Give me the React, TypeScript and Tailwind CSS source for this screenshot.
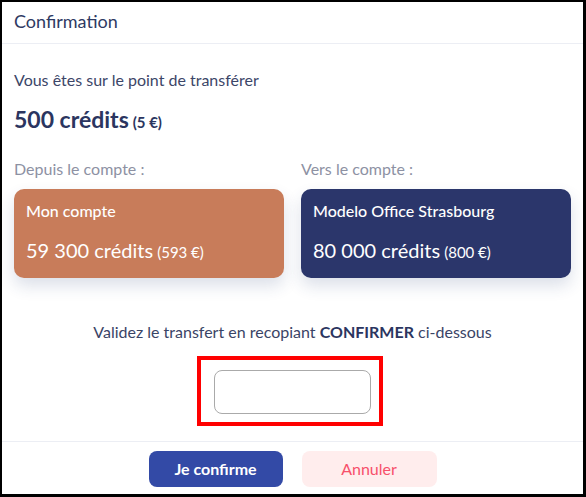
export default function App() {
  return (
    <div className="w-[586px] h-[497px] bg-black pl-[2px] pt-[2px] pr-[3px] pb-[3px] font-['Lato',sans-serif]">
      <div className="h-full bg-white flex flex-col">
        <div className="h-[42px] px-[12px] pb-[2px] flex items-center border-b border-[#eceef4]">
          <h2 className="text-[18px] text-[#2e3a63]">Confirmation</h2>
        </div>

        <div className="px-[12px]">
          <p className="mt-[26px] text-[16px] leading-[20px] text-[#3c4668]">Vous êtes sur le point de transférer</p>
          <p className="mt-[15px] leading-[28px] font-bold text-[#2b3560]">
            <span className="text-[23px]">500 crédits</span> <span className="text-[15px]">(5 €)</span>
          </p>

          <div className="mt-[23px] grid grid-cols-2 gap-[17px]">
            <div>
              <p className="text-[16px] leading-[20px] text-[#8d91a3]">Depuis le compte :</p>
              <div className="mt-[10px] h-[89px] rounded-[10px] bg-[#c87c5a] text-white px-[12px] shadow-[0_8px_16px_rgba(40,60,120,0.16)]">
                <p className="pt-[12px] text-[16px] leading-[20px] font-medium">Mon compte</p>
                <p className="mt-[17px] leading-[24px]">
                  <span className="text-[20px]">59 300 crédits</span> <span className="text-[15px]">(593 €)</span>
                </p>
              </div>
            </div>
            <div>
              <p className="text-[16px] leading-[20px] text-[#8d91a3]">Vers le compte :</p>
              <div className="mt-[10px] h-[89px] rounded-[10px] bg-[#2b366b] text-white px-[12px] shadow-[0_8px_16px_rgba(40,60,120,0.16)]">
                <p className="pt-[12px] text-[16px] leading-[20px] font-medium">Modelo Office Strasbourg</p>
                <p className="mt-[17px] leading-[24px]">
                  <span className="text-[20px]">80 000 crédits</span> <span className="text-[15px]">(800 €)</span>
                </p>
              </div>
            </div>
          </div>

          <p className="mt-[44px] text-center text-[16px] leading-[20px] text-[#3a4466]">
            Validez le transfert en recopiant <span className="font-bold text-[#2b3560]">CONFIRMER</span> ci-dessous
          </p>

          <div className="mt-[14px] ml-[183px] w-[186px] h-[70px] border-4 border-[#ff0000] pt-[10px] pl-[13px] pr-[8px] pb-[8px]">
            <input className="block w-[157px] h-[44px] rounded-[8px] border border-[#aaaaaa] outline-none" />
          </div>
        </div>

        <div className="mt-[15px] border-t border-[#eceef4] flex justify-center gap-[19px] pt-[9px]">
          <button className="w-[134px] h-[36px] rounded-[8px] bg-[#334aa6] text-white text-[16px] font-bold">Je confirme</button>
          <button className="w-[135px] h-[36px] rounded-[8px] bg-[#ffeded] text-[#f7506a] text-[16px]">Annuler</button>
        </div>
      </div>
    </div>
  );
}
